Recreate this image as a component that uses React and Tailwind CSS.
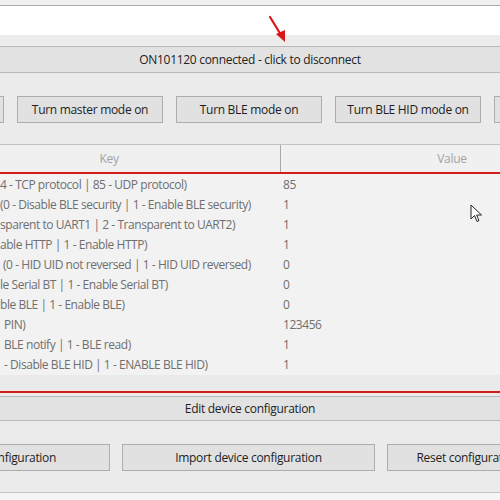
import React from 'react';

const rows = [
    { key: '4 - TCP protocol | 85 - UDP protocol)', value: '85', pad: 'pl-0' },
    { key: '(0 - Disable BLE security | 1 - Enable BLE security)', value: '1', pad: 'pl-0' },
    { key: 'sparent to UART1 | 2 - Transparent to UART2)', value: '1', pad: 'pl-0' },
    { key: 'able HTTP | 1 - Enable HTTP)', value: '1', pad: 'pl-0' },
    { key: '(0 - HID UID not reversed | 1 - HID UID reversed)', value: '0', pad: 'pl-[3px]' },
    { key: 'le Serial BT | 1 - Enable Serial BT)', value: '0', pad: 'pl-0' },
    { key: 'ble BLE | 1 - Enable BLE)', value: '0', pad: 'pl-0' },
    { key: 'PIN)', value: '123456', pad: 'pl-[4px]' },
    { key: 'BLE notify | 1 - BLE read)', value: '1', pad: 'pl-[4px]' },
    { key: '- Disable BLE HID | 1 - ENABLE BLE HID)', value: '1', pad: 'pl-[4px]' },
];

const topButtons = ['Turn slave mode on', 'Turn master mode on', 'Turn BLE mode on', 'Turn BLE HID mode on', 'Turn off'];
const bottomButtons = [
    { label: 'Export device configuration', w: 'w-[253px]' },
    { label: 'Import device configuration', w: 'w-[253px]' },
    { label: 'Reset configuration', w: 'w-[162px]' },
];

const WinButton = ({ children, className }) => (
    <div className={`shrink-0 h-[27px] flex items-center justify-center bg-[#e1e1e1] border border-[#adadad] text-[#1e1e1e] whitespace-nowrap ${className}`}>
        {children}
    </div>
);

const App = () => {
    return (
        <div className="relative w-[500px] h-[500px] overflow-hidden bg-[#f0f0f0] font-['Open_Sans',sans-serif] text-[12px] tracking-[-0.3px]">
            <div className="h-[5px] bg-[#f0f0f0]" />
            <div className="h-px bg-[#a9a9a9]" />
            <div className="h-[29px] bg-white" />
            <div className="h-[11px] bg-[#ececec]" />

            <div className="h-[27px] flex items-center justify-center bg-[#e2e2e2] border-y border-[#b9b9b9] text-[#222]">
                ON101120 connected - click to disconnect
            </div>

            <div className="h-[71px] bg-[#ebebeb] pt-[23px]">
                <div className="flex gap-[13px] -ml-[142px]">
                    {topButtons.map((b) => (
                        <WinButton key={b} className="w-[146px]">{b}</WinButton>
                    ))}
                </div>
            </div>

            <div className="h-[28px] flex bg-[#f0f0f0] border-t border-[#c3c3c3] text-[#a3a3a3]">
                <div className="shrink-0 w-[343px] -ml-[62px] flex items-center justify-center border-r border-[#a8a8a8]">Key</div>
                <div className="shrink-0 w-[342px] flex items-center justify-center">Value</div>
            </div>
            <div className="h-[2px] bg-[#d21c1c]" />

            <div className="h-[201px] bg-[#f2f2f2] pt-px text-[#6f6f6f] tracking-[-0.45px]">
                {rows.map((r, i) => (
                    <div key={i} className="h-[20px] flex items-center">
                        <div className={`w-[283px] shrink-0 whitespace-nowrap overflow-hidden ${r.pad}`}>{r.key}</div>
                        <div>{r.value}</div>
                    </div>
                ))}
            </div>
            <div className="h-[16px] bg-[#eaeaea]" />
            <div className="h-[2px] bg-[#d21c1c]" />
            <div className="h-[3px] bg-[#ebebeb]" />

            <div className="h-[25px] flex items-center justify-center bg-[#e2e2e2] border-y border-[#b9b9b9] text-[#222]">
                Edit device configuration
            </div>

            <div className="h-[71px] bg-[#ebebeb] pt-[23px]">
                <div className="flex gap-[12px] -ml-[143px]">
                    {bottomButtons.map((b) => (
                        <WinButton key={b.label} className={b.w}>{b.label}</WinButton>
                    ))}
                </div>
            </div>
            <div className="h-px bg-[#c4c4c4]" />
            <div className="h-[7px] bg-[#f6f6f6]" />

            {/* red annotation arrow */}
            <svg className="absolute left-[266px] top-[14px]" width="24" height="32" viewBox="0 0 24 32">
                <line x1="4" y1="3" x2="15" y2="21" stroke="#d81818" strokeWidth="2.2" strokeLinecap="round" />
                <polygon points="10,20 19,16 19,28" fill="#d81818" />
            </svg>

            {/* mouse cursor */}
            <svg className="absolute left-[470px] top-[204px]" width="14" height="20" viewBox="0 0 14 20">
                <path d="M1 1 L1 15 L4.5 11.5 L7 17.5 L9 16.6 L6.6 11 L11.5 11 Z" fill="#fff" stroke="#222" strokeWidth="1" strokeLinejoin="round" />
            </svg>
        </div>
    );
};

export default App;
